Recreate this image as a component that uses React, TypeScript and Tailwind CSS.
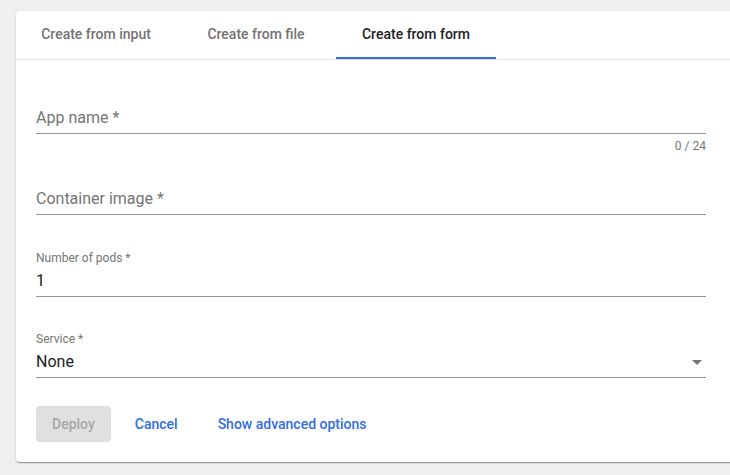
const tabs = ['Create from input', 'Create from file', 'Create from form'];

function Tabs() {
  return (
    <div className="flex border-b border-[#e0e0e0]">
      {tabs.map((t, i) => (
        <div key={t} className="flex h-12 w-[160px] flex-col">
          <div
            className={
              'flex flex-1 items-center justify-center text-sm font-medium ' +
              (i === 2 ? 'text-[#202124]' : 'text-[#737373]')
            }
          >
            {t}
          </div>
          <div className={i === 2 ? 'h-[2px] bg-[#326de6]' : 'h-[2px]'} />
        </div>
      ))}
    </div>
  );
}

export default function App() {
  return (
    <div
      className="h-[475px] w-[730px] overflow-hidden bg-[#eeeff1] pl-4 pt-[11px]"
      style={{ fontFamily: 'Roboto, "Liberation Sans", sans-serif' }}
    >
      <div className="w-[760px] rounded-[4px] bg-white shadow-[0_2px_1px_-1px_rgba(0,0,0,0.2),0_1px_1px_0_rgba(0,0,0,0.14),0_1px_3px_0_rgba(0,0,0,0.12)]">
        <Tabs />
        <form className="w-[710px] px-5 pb-5">
          {/* App name */}
          <div className="mt-[46px] border-b border-[#949494] pb-[3px]">
            <div className="h-6 text-base leading-6 text-[#757575]">App name *</div>
          </div>
          <div className="mt-1 text-right text-xs leading-4 text-[#757575]">0 / 24</div>

          {/* Container image */}
          <div className="mt-[33px] border-b border-[#949494] pb-[3px]">
            <div className="h-6 text-base leading-6 text-[#757575]">Container image *</div>
          </div>

          {/* Number of pods */}
          <div className="mt-[35px] border-b border-[#949494] pb-[3px]">
            <div className="text-xs leading-4 text-[#757575]">Number of pods *</div>
            <div className="mt-[3px] h-6 text-base leading-6 text-[#202124]">1</div>
          </div>

          {/* Service */}
          <div className="mt-[34px] border-b border-[#949494] pb-[3px]">
            <div className="text-xs leading-4 text-[#757575]">Service *</div>
            <div className="mt-[3px] flex h-6 items-center justify-between text-base leading-6 text-[#202124]">
              <span>None</span>
              <svg width="10" height="5" viewBox="0 0 10 5" className="mr-1">
                <path d="M0 0h10L5 5z" fill="#757575" />
              </svg>
            </div>
          </div>

          <div className="mt-7 flex gap-2">
            <button
              type="button"
              disabled
              className="h-9 rounded-[4px] bg-[#e0e0e0] px-4 text-sm font-medium text-[#a6a6a6]"
            >
              Deploy
            </button>
            <button type="button" className="h-9 rounded-[4px] px-4 text-sm font-medium text-[#326de6]">
              Cancel
            </button>
            <button type="button" className="h-9 rounded-[4px] px-4 text-sm font-medium text-[#326de6]">
              Show advanced options
            </button>
          </div>
        </form>
      </div>
    </div>
  );
}
